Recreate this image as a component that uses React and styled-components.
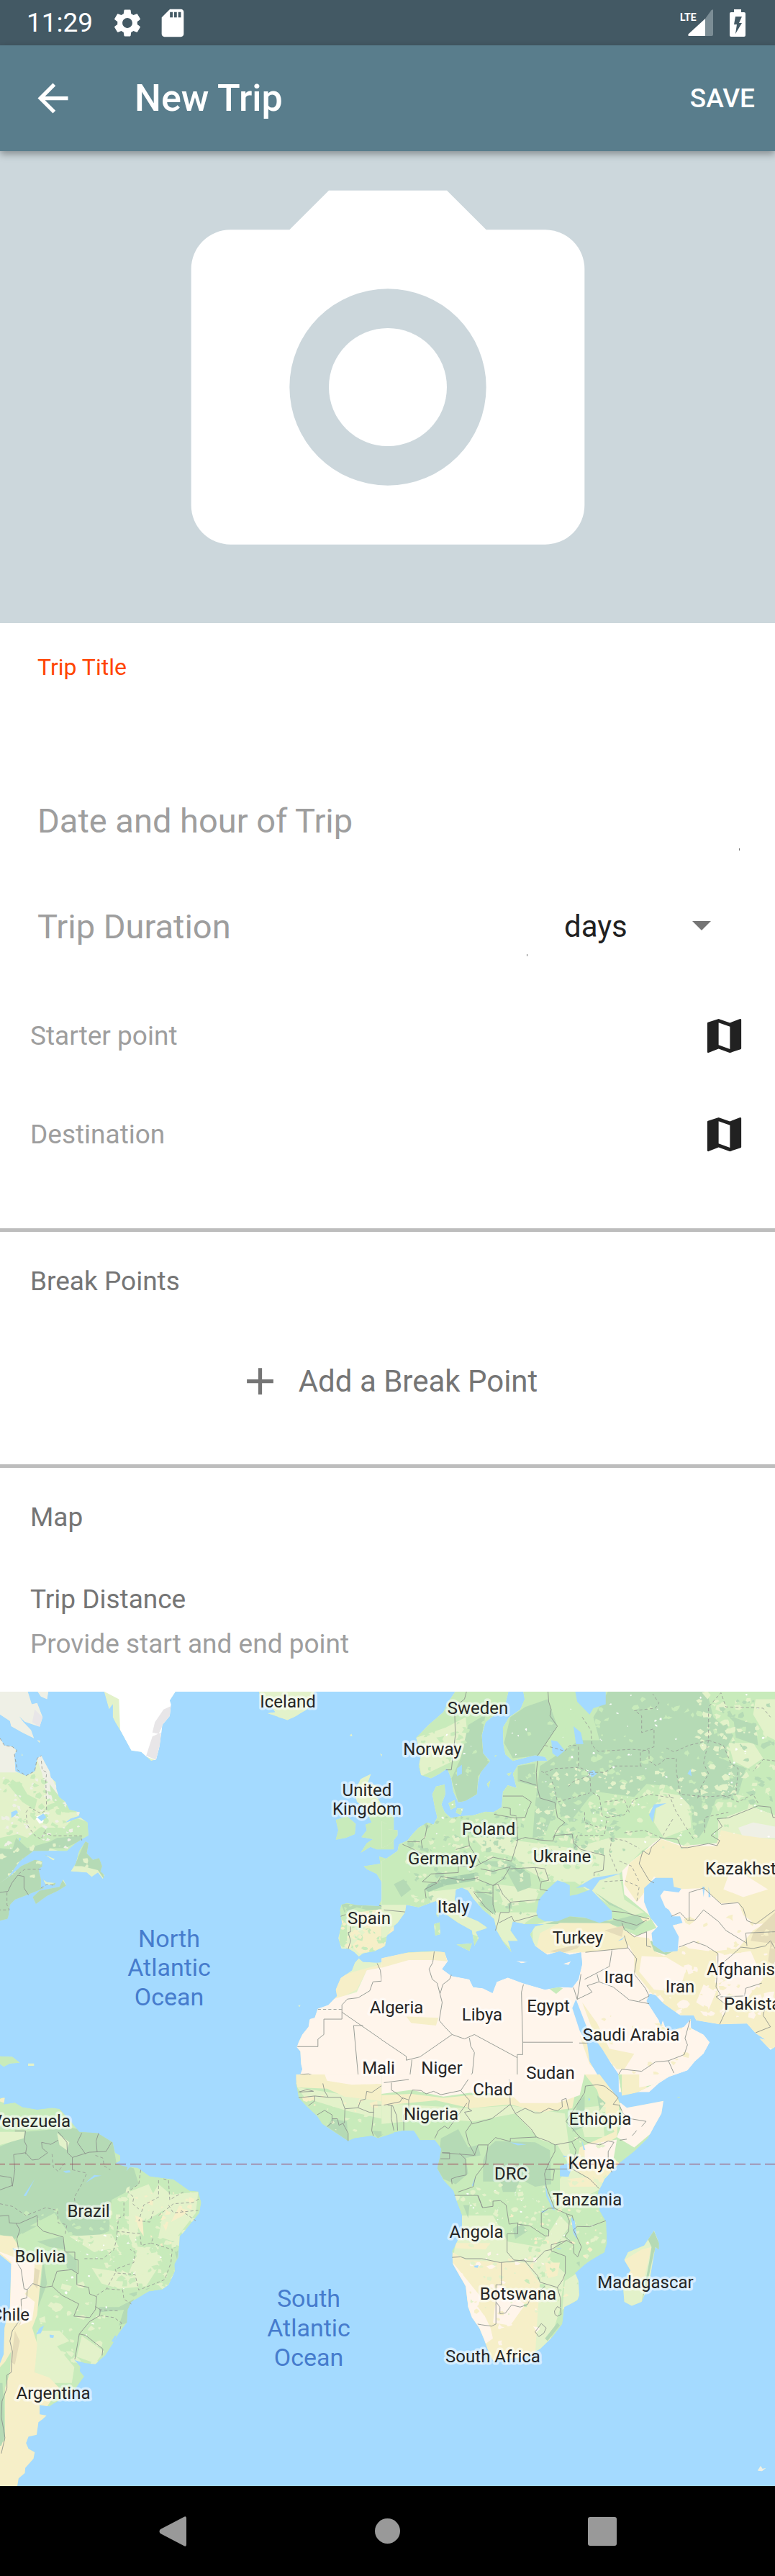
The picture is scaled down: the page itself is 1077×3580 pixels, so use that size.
import React from "react";
import styled, { createGlobalStyle } from "styled-components";
import { MdAdd, MdArrowBack, MdMap, MdSdCard, MdSettings } from "react-icons/md";

const color = {
  statusBar: "#435964",
  appBar: "#597d8c",
  cover: "#ccd7dc",
  accent: "#ff4500",
  hint: "#9e9e9e",
  secondary: "#757575",
  primary: "#212121",
  divider: "#bdbdbd",
};

const land = {
  water: "#a4daff",
  desert: "#fff5eb",
  steppe: "#f6efc8",
  grass: "#e3f2ca",
  green: "#c8ebbb",
  forest: "#b5dab5",
  tundra: "#eff0e6",
  snow: "#ffffff",
  rock: "#e8e6e8",
  sand: "#e5dcba",
};

const GlobalStyle = createGlobalStyle`
  *, *::before, *::after { box-sizing: border-box; }
  body {
    margin: 0;
    background: #fff;
    font-family: Roboto, "Liberation Sans", sans-serif;
    color: ${color.primary};
  }
  button, input, select { font-family: inherit; }
`;

const Page = styled.div`
  display: flex;
  flex-direction: column;
  min-height: 100vh;
  background: #fff;
`;

const StatusBar = styled.div`
  display: flex;
  align-items: center;
  justify-content: space-between;
  height: 63px;
  padding: 0 41px 0 37px;
  background: ${color.statusBar};
  color: #fff;
`;

const StatusGroup = styled.div`
  display: flex;
  align-items: center;
  gap: ${(p) => p.$gap}px;
`;

const Clock = styled.time`
  margin-right: 8px;
  font-size: 37px;
  line-height: 44px;
`;

const AppBar = styled.header`
  position: relative;
  z-index: 1;
  display: flex;
  align-items: center;
  height: 147px;
  padding: 0 28px 0 42px;
  background: ${color.appBar};
  color: #fff;
  box-shadow: 0 4px 10px rgba(0, 0, 0, 0.35);
`;

const PlainButton = styled.button`
  display: flex;
  align-items: center;
  justify-content: center;
  padding: 0;
  border: 0;
  background: none;
  color: inherit;
  cursor: pointer;
`;

const AppTitle = styled.h1`
  flex: 1;
  margin: 0 0 0 82px;
  font-size: 52px;
  line-height: 60px;
  font-weight: 500;
`;

const SaveButton = styled(PlainButton)`
  font-size: 37px;
  line-height: 44px;
  font-weight: 500;
`;

const Cover = styled(PlainButton)`
  width: 100%;
  background: ${color.cover};
  color: #fff;
`;

const Form = styled.form`
  display: flex;
  flex-direction: column;
`;

const TitleField = styled.div`
  display: flex;
  flex-direction: column;
  height: 201px;
  padding: 41px 49px 0 52px;
`;

const TitleLabel = styled.label`
  font-size: 32px;
  line-height: 40px;
  color: ${color.accent};
`;

const TextInput = styled.input`
  flex: 1;
  width: 100%;
  min-width: 0;
  padding: 0;
  border: 0;
  outline: 0;
  background: none;
  font-size: ${(p) => p.$size}px;
  line-height: 56px;
  color: ${color.primary};
  &::placeholder { color: ${color.hint}; opacity: 1; }
`;

const FieldRow = styled.div`
  display: flex;
  height: 147px;
  padding-left: 50px;
  padding-right: ${(p) => p.$right}px;
`;

const FieldBox = styled.div`
  position: relative;
  display: flex;
  flex: 1;
  padding-left: 2px;
  &::after {
    content: "";
    position: absolute;
    right: 0;
    bottom: 32px;
    width: 1px;
    height: 3px;
    background: ${color.secondary};
  }
`;

const UnitBox = styled.div`
  position: relative;
  display: flex;
  flex: 0 0 344px;
  svg {
    position: absolute;
    right: 89px;
    top: 66px;
    pointer-events: none;
  }
`;

const UnitSelect = styled.select`
  flex: 1;
  padding: 0 0 0 51px;
  border: 0;
  outline: 0;
  appearance: none;
  background: none;
  font-size: 42px;
  color: ${color.primary};
`;

const PlaceList = styled.div`
  padding: 10px 39px 62px 42px;
`;

const PlaceRow = styled.div`
  display: flex;
  align-items: center;
  height: 137px;
`;

const Section = styled.section`
  display: flex;
  flex-direction: column;
  padding: 47px 42px 44px;
  border-top: 5px solid ${color.divider};
`;

const SectionTitle = styled.h2`
  margin: 0;
  font-size: 37px;
  line-height: 44px;
  font-weight: 400;
  color: ${color.secondary};
`;

const AddButton = styled(PlainButton)`
  gap: 22px;
  height: 144px;
  margin-top: 44px;
  font-size: 42px;
  color: ${color.secondary};
`;

const Distance = styled.div`
  display: flex;
  flex-direction: column;
  gap: 18px;
  margin-top: 70px;
`;

const DistanceHint = styled.p`
  margin: 0;
  font-size: 37px;
  line-height: 44px;
  color: ${color.hint};
`;

const MapFrame = styled.div`
  overflow: hidden;
  background: ${land.water};
`;

const MapDrawing = styled.svg`
  display: block;
  width: 100%;
  height: auto;
`;

const CountryLabel = styled.text`
  font-size: 24px;
  fill: #262626;
  stroke: rgba(255, 255, 255, 0.55);
  stroke-width: 7px;
  stroke-linejoin: round;
  paint-order: stroke;
`;

const OceanLabel = styled.text`
  font-size: 34px;
  fill: #467ccd;
  text-anchor: middle;
`;

const NavBar = styled.nav`
  display: grid;
  grid-template-columns: repeat(3, 1fr);
  height: 125px;
  padding: 0 91px;
  background: #000;
  color: #999;
`;

/* ---------- icons ---------- */

const SignalIcon = () => (
  <svg width="46" height="40" viewBox="0 0 46 40" aria-label="LTE signal" role="img">
    <path d="M46 2.5V36a2 2 0 0 1-2 2h-9V14L43.500 2.200Q46 0 46 2.500z" fill="#7b8d95" />
    <path d="M35 14v24H13Q10 38 12 35z" fill="#fff" />
    <text x="0" y="17" fontSize="14" fontWeight="700" fill="#fff">LTE</text>
  </svg>
);

const BatteryIcon = () => (
  <svg width="22" height="38" viewBox="0 0 22 38" aria-label="Charging" role="img">
    <path
      fillRule="evenodd"
      fill="#fff"
      d="M6 0h10v4h4a2 2 0 0 1 2 2v30a2 2 0 0 1-2 2H2a2 2 0 0 1-2-2V6a2 2 0 0 1 2-2h4zM8 10L6 21h4L8 34l9-15h-4l4-9z"
    />
  </svg>
);

const CameraIcon = () => (
  <svg width="656" height="656" viewBox="0 0 24 24" fill="currentColor" aria-hidden="true">
    <path d="M9 2L7 4H4a2 2 0 0 0-2 2v12a2 2 0 0 0 2 2h16a2 2 0 0 0 2-2V6a2 2 0 0 0-2-2h-3l-2-2zM12 17a5 5 0 1 1 0-10 5 5 0 0 1 0 10z" />
    <circle cx="12" cy="12" r="3" />
  </svg>
);

/* ---------- map ---------- */

// Small irregular patches that give the terrain its texture.
function patches(seed, count, [x0, y0, x1, y1], size) {
  let s = seed;
  const rnd = () => {
    s = (s * 1664525 + 1013904223) % 4294967296;
    return s / 4294967296;
  };
  let d = "";
  for (let i = 0; i < count; i++) {
    const cx = x0 + rnd() * (x1 - x0);
    const cy = y0 + rnd() * (y1 - y0);
    const r = size * (0.3 + rnd());
    const n = 5 + Math.floor(rnd() * 4);
    for (let k = 0; k < n; k++) {
      const a = (k / n) * Math.PI * 2;
      const q = r * (0.3 + rnd());
      d += `${k ? "L" : "M"}${Math.round(cx + Math.cos(a) * q * 1.3)},${Math.round(cy + Math.sin(a) * q)}`;
    }
    d += "Z";
  }
  return d;
}

// The world is kept as four sheets, each with its own drawing grid.
const sheets = [
  {
    id: "nw",
    transform: "translate(0 -11) scale(0.34435 0.35714)",
    base: land.grass,
    shape:
      "M0,31L112,31 128,80 150,75 172,130 160,167 100,148 76,125 95,150 125,180 137,212 90,190 45,165 40,145 0,120Z M152,31L195,31 190,60 165,50Z M150,220l12,2 -2,10Z M88,270l5,8 -6,4Z M0,212L18,240 50,245 68,260 58,275 62,340 75,345 105,358 140,340 150,290 167,280 180,305 200,340 205,365 225,382 228,410 238,440 262,458 280,490 322,500 318,515 285,525 265,540 325,520 353,540 357,590 330,605 305,620 270,650 135,650 80,690 35,750 0,775 45,745 85,710 140,685 170,690 170,712 155,720 165,760 165,795 190,790 115,820 60,840 40,860 35,900 30,915 0,922Z M345,614L357,620 350,660 375,685 400,678 412,710 405,730 422,745 415,760 395,735 370,752 350,735 285,730 305,700 320,650Z M132,830L160,805 240,790 255,760 268,785 235,805 190,825 145,857Z M180,665L222,682 215,688Z M172,760L190,772 225,775 220,785 185,782Z M0,1450L50,1452 80,1475 40,1478 15,1490 0,1480Z M113,1477h25v10h-25Z M420,31L440,100 455,80 455,130 465,150 490,190 530,260 570,265 610,300 630,295 645,240 655,160 685,125 690,80 685,65 708,31Z M1045,31L1270,31 1240,100 1190,128 1160,142 1080,115 1110,110 1095,90 1050,60Z M1410,203l8,-10 5,12Z M1532,270l10,5 -1,10Z M1430,420L1455,370 1498,350 1485,385 1530,400 1515,430 1540,470 1590,520 1590,645 1520,645 1495,635 1455,658 1480,620 1505,605 1458,597 1480,570 1475,548 1500,540 1470,480 1440,460Z M1355,530L1400,515 1436,545 1432,585 1395,600 1355,607 1365,570Z M1590,690L1530,672 1535,700 1468,710 1480,722 1520,740 1545,780 1545,830 1530,860 1590,880Z M1378,860L1400,853 1440,862 1530,865 1590,870 1590,960 1560,980 1555,1020 1515,1040 1465,1050 1448,1062 1430,1045 1408,1032 1378,1032 1365,990 1380,930 1372,880Z M1590,1080L1520,1085 1465,1082 1448,1068 1432,1085 1420,1115 1375,1145 1355,1190 1360,1215 1325,1250 1282,1265 1270,1300 1250,1305 1245,1335 1220,1365 1205,1395 1198,1415 1212,1430 1215,1480 1220,1500 1208,1530 1195,1555 1205,1590 1590,1590Z M1202,1250l12,0 -6,9Z",
    areas: [
      [land.tundra, "M0,0H205V225H60L70,345 0,345Z M145,280L170,280 205,350 235,430 190,440 170,350Z"],
      [land.green, "M0,600L70,585 110,600 160,560 260,560 300,520 360,540 360,700 270,660 200,640 0,700Z M30,390L80,380 110,430 150,450 140,490 90,460Z M200,390L240,440 310,500 250,500 210,450Z M0,1440H80V1490H0Z M1340,500H1590V880H1340Z M1370,850H1590V890H1400V1010H1370Z"],
      [land.forest, "M0,640L50,645 65,600 110,640 200,615 230,600 330,592 330,610 260,640 200,640 170,720 180,800 0,940Z M345,610L360,620 350,660 410,680 420,760 395,725 330,710 300,710Z M120,850L170,800 250,760 270,790 150,860Z M1376,855L1530,865 1560,880 1480,880 1440,870 1390,890Z"],
      [land.snow, "M400,20H720L700,100 650,200 635,300 530,262 485,180 480,60Z M140,520L150,515 190,500 195,530 160,545Z"],
      [land.rock, "M660,100L695,85 685,130 655,165 640,195 615,190 625,150Z M615,205L650,190 645,240 630,297 590,280 600,250Z M140,100L172,130 160,167 130,150Z"],
      [land.steppe, "M1440,890L1590,870V960L1540,1030 1450,1050 1420,1020 1480,960Z M1340,1240L1370,1140 1430,1120 1600,1075V1095L1480,1115 1440,1190Z M1190,1545L1310,1560 1590,1550V1600H1190Z"],
      [land.desert, "M1180,1590V1400L1300,1240 1440,1200 1480,1115 1590,1095V1545L1310,1558 1250,1525 1205,1530Z"],
    ],
    texture: [
      [land.tundra, 11, 60, [0, 360, 330, 640], 8],
      [land.green, 5, 60, [20, 360, 340, 600], 12],
      [land.green, 8, 40, [1370, 860, 1560, 1040], 10],
      [land.steppe, 14, 26, [1370, 900, 1560, 1040], 10],
      [land.grass, 31, 30, [1060, 31, 1260, 135], 12],
      [land.grass, 3, 20, [0, 600, 420, 760], 10],
    ],
    lakes: "M45,500l20,-8 8,8 -12,12 -15,10Z M150,520l25,-15 12,15 -20,15Z M75,600l10,2 -5,12Z",
    borders:
      "M0,812L32,808 48,775 72,745 97,750 97,795 115,822 M1530,862L1590,890 M1522,1088L1535,1115 1540,1157 1505,1160 1492,1195 1445,1222 1402,1227 1380,1250 1380,1305 1307,1305 1307,1365 1283,1383 1283,1412 1200,1412 M1380,1278L1590,1418 M1465,1330L1427,1330 1447,1540 1330,1542 1305,1558 1270,1525 1245,1518 1212,1520 M1415,945V965L1405,968 1415,1000 1405,1032 M1375,905L1395,898",
    dashes:
      "M0,212L18,240 50,245 68,260 58,275 70,335 105,358 140,340 150,290 167,280 M167,300L170,335 188,345 185,380 188,490 165,505 120,480 105,500 110,550 140,590 165,605 185,570 M175,580L215,592H330V610 M75,740L100,722H165 M165,795L190,780 222,785 M28,812V860L38,880 0,880 M1283,1267H1380",
  },
  {
    id: "ne",
    transform: "translate(537 -11) scale(0.34435 0.35714)",
    base: land.desert,
    shape:
      "M-20,535L0,545 0,565 45,570 45,590 20,620 0,632 -20,640Z M-20,690L0,680 45,650 50,625 85,610 105,585 130,560 165,540 190,548 205,520 195,480 185,430 200,400 235,392 238,430 222,470 235,500 260,522 300,515 350,512 400,498 432,500 465,480 470,420 490,395 525,405 510,350 530,318 610,300 650,300 640,285 600,278 510,300 480,275 472,235 470,170 495,130 540,100 558,60 550,20 1590,20 1590,1400 1550,1425 1505,1380 1530,1385 1490,1360 1455,1322 1345,1325 1250,1310 1240,1290 1185,1290 1120,1245 1085,1210 1062,1207 1050,1235 1100,1310 1108,1335 1115,1308 1125,1335 1150,1350 1200,1335 1228,1305 1230,1340 1280,1365 1305,1395 1280,1440 1245,1470 1215,1505 1140,1530 1100,1555 1060,1590 -20,1590 -20,1068 90,1045 190,1040 235,1045 248,1080 225,1110 262,1137 335,1150 350,1180 390,1185 428,1203 445,1160 490,1143 550,1165 640,1190 700,1180 750,1182 775,1150 790,1090 785,1045 740,1055 700,1040 650,1055 600,1020 580,975 600,945 640,935 560,935 510,925 500,960 530,1000 490,1000 505,1045 475,1010 445,960 435,915 390,880 350,835 330,805 305,793 280,800 275,840 310,900 370,925 408,950 360,965 372,990 355,1020 345,960 290,930 230,890 200,845 130,870 80,860 75,890 45,930 20,950 0,985 -20,990Z M285,20L495,20 480,80 445,115 400,150 385,200 390,270 418,300 380,345 370,380 365,430 320,455 290,462 270,420 262,370 245,330 215,350 180,368 140,355 130,320 140,280 120,210 170,160 230,110 250,70Z M282,1015L345,1010 335,1040Z M192,935L215,928 217,975 197,980Z M200,895L212,885 210,910Z M522,1078L572,1083 545,1088Z M712,1090L745,1080 735,1095Z M250,465L275,452 280,480 260,490Z M285,485l25,0 -10,25 -20,-8Z M405,390l15,-15 -8,30Z M485,350l20,-5 -10,15Z M435,280l10,-3 -5,8Z",
    areas: [
      [land.green, "M-20,0H1590V520L1480,480 1340,530 1340,620 1200,630 1100,600 1030,660 950,720 960,820 1060,900 1090,950 1010,980 900,935 640,940 560,1060 -20,1050Z"],
      [land.grass, "M520,610L750,640 900,600 1110,600 1030,650 940,740 960,840 1040,890 1000,900 900,860 760,770 650,770 560,720 490,640Z M1340,530L1480,480 1590,520V600H1340Z M1490,60H1590V230L1530,200 1480,120Z M1380,230H1480L1520,290 1460,330 1400,300Z M1100,420L1220,440 1230,560 1120,600 1080,540Z M350,600L500,590 510,670 400,650Z M240,170L320,130 330,230 270,300 140,360 120,210Z M170,810L350,790 420,1000 300,960 180,860Z M440,780L620,800 600,850 480,870Z M420,890L620,890 560,930 520,1050 430,960Z M-20,860H80L60,1000H-20Z M590,940L700,910 700,1000 590,1030Z M1500,520H1590V640H1480Z"],
      [land.tundra, "M1420,560L1480,540 1590,560V600L1440,600Z"],
      [land.forest, "M900,20H1290L1320,130 1400,200 1350,290 1450,330 1420,430 1330,450 1290,560 1260,600 1240,590 1230,480 1150,400 1050,390 1000,440 850,420 820,440 740,540 690,460 640,590 590,600 600,470 620,320 700,270 780,220 860,220 835,130Z M500,130L560,90 650,60 690,165 610,280 510,290 475,230Z M330,160L400,120 385,200 390,270 418,305 370,360 365,430 320,460 290,460 262,370 300,290Z M380,690L500,690 580,740 585,790 530,810 480,720 400,705Z M360,800L430,830 440,900 380,860Z M640,935L740,905 800,912 900,925 1000,900 900,850 840,810 900,860 1050,920 1000,960 900,935Z M1400,130L1490,160 1500,240 1410,210Z M530,320L600,310 605,400 530,380Z M1010,1020L1070,1000 1120,1045 1180,1040 1150,1062Z M30,780L70,760 100,800 60,830Z"],
      ["#a7cfae", "M155,800L170,780 240,755 360,735 360,765 240,785 170,810Z M490,700L560,725 540,740Z"],
      [land.steppe, "M1030,660L1110,605 1190,632 1330,632 1350,570 1440,590 1590,610V930L1490,935 1440,900 1420,850 1350,855 1280,795 1160,800 1080,750 1035,820 1010,850 960,780 980,700Z M600,1050L620,970 700,930 900,932 1000,980 970,1030 800,1045Z M960,980L1060,990 1080,1040 1120,1060 1200,1020 1330,1040 1420,1030 1480,960 1590,900V1430L1240,1320 1100,1240 1000,1120 1000,1060Z M-20,1050L235,1040 245,1080 190,1075 90,1075 -20,1105Z M790,1240L850,1320 900,1420 1000,1440 960,1500 930,1500 860,1420Z M80,1295L210,1300 200,1330 100,1320Z M780,1370L810,1400 840,1500 820,1480Z"],
      [land.desert, "M1030,1060L1130,1065 1210,1110 1180,1200 1080,1190 1020,1120Z M1330,1060L1470,1040 1520,1150 1440,1240 1340,1230Z M1280,1170L1330,1200 1300,1270 1250,1240Z M1390,720L1440,740 1540,800 1440,830 1360,800Z M1180,1000L1340,1010 1300,1040 1220,1030Z"],
      [land.sand, "M1480,970L1590,870V1110L1540,1080 1550,1010 1470,1000Z M660,1040L790,1010 770,1030 700,1050Z M880,960L960,940 950,985Z"],
      [land.green, "M655,1185L680,1175 712,1185 685,1207Z"],
    ],
    texture: [
      [land.green, 21, 130, [560, 40, 1440, 600], 11],
      [land.grass, 42, 150, [600, 330, 1250, 640], 9],
      [land.forest, 17, 100, [60, 500, 560, 900], 10],
      [land.grass, 71, 120, [80, 520, 560, 1000], 9],
      [land.forest, 91, 70, [620, 480, 960, 660], 11],
      [land.green, 33, 60, [500, 620, 900, 900], 11],
      [land.grass, 55, 90, [1250, 40, 1568, 480], 13],
      [land.forest, 6, 50, [1350, 60, 1568, 460], 13],
      [land.snow, 77, 90, [130, 40, 1550, 620], 4],
      [land.green, 12, 50, [130, 60, 480, 360], 12],
      [land.steppe, 23, 60, [1020, 900, 1568, 1350], 12],
      [land.desert, 29, 40, [1050, 1040, 1568, 1300], 14],
      [land.steppe, 61, 26, [800, 1240, 1230, 1540], 10],
    ],
    lakes:
      "M605,890L615,840 650,800 690,765 722,775 740,785 740,825 770,820 825,800 865,840 910,885 910,915 860,930 800,910 740,905 690,925 640,925 612,910Z M765,795L835,755 950,737 860,765 830,805 800,790Z M1040,795L1085,755 1155,755 1160,790 1190,797 1180,812 1120,805 1105,825 1125,870 1140,880 1155,905 1185,905 1195,930 1155,940 1180,985 1175,1040 1120,1045 1075,1015 1070,970 1095,945 1065,910 1040,850Z M760,20H885L885,80 835,95 820,120 770,70Z M765,1228L750,1262 780,1350 810,1400 820,1470 860,1535 880,1600 938,1600 937,1520 905,1475 870,1420 810,1340 790,1290Z M665,220L690,225 720,260 690,285 670,270Z M755,165L785,190 795,235 765,235Z M285,330L305,315 305,350 285,360Z M815,345l20,-10 15,15 -20,15Z M1275,790l10,0 -5,40Z M1300,790l8,40 -8,0Z M1060,510L1080,470 1130,465 1085,485 1075,540Z M1215,350l12,-18 5,28Z M935,1000l25,-15 -10,12Z",
    borders:
      "M193,1042L187,1085 172,1110 185,1150 205,1165 217,1210 225,1240 213,1310 235,1335 265,1365 135,1452 80,1465 80,1450 -20,1385 M262,1133L255,1150 228,1170 217,1205 M553,1170L545,1200 550,1395H752 M778,1398H815 M550,1395V1443H528V1590 M265,1365L315,1382 355,1365 528,1455 M335,1378L340,1410 355,1435 347,1515 300,1568 M103,1463L93,1540 -10,1555 M770,1228L830,1200 810,1175 858,1160 915,1180 980,1230 1060,1245 M803,1045L905,1035 975,1028 M910,1037L900,1100 800,1150 M850,1130L858,1160 M960,980L975,1028 1010,1070 1000,1130 1045,1185 1060,1215 1020,1235 M755,1182L770,1228 785,1130 M1225,1310L1205,1380 1215,1405 1202,1443 1138,1467 1085,1472 1030,1508 950,1500 937,1520 M1138,1467L1160,1515 M1180,1025L1240,1003 1290,1020 1338,1050V1100L1330,1180 1348,1210 1330,1218 1378,1255 1345,1325 M1348,1218L1445,1215 1450,1185 1515,1165 M1340,1100L1390,1060 1430,1025 1480,1030 1530,1020 1550,1000 1568,1030 M1150,905L1185,890 1215,920H1245L1280,880 1340,925 1370,960 1455,1010 M1222,920V812L1280,795 1352,858 1420,852 1440,875 1455,922 1490,935 1568,880 M1455,1020L1450,970 1568,965 M1530,1255L1520,1290 1550,1335 1490,1358 M1080,775L1060,765 1020,700 1035,650 1060,665 1070,635 1110,600 1175,605 1190,638 1215,638 1300,622 1335,630 1345,610 1310,590 1355,555 1335,525 1380,522 1500,475 1550,480 1560,520 1568,520 M522,610L560,598 620,608 672,612 680,590 750,585 755,620 785,645 880,668 875,725 838,735V748 M620,445L680,462 690,520 720,540 695,560 672,600 M323,31L315,60 275,90 278,200 262,335 240,335 M652,31L655,70 665,100 660,125 690,165 610,280 M610,300L605,345 608,400 620,445 M470,437H550L585,460 570,490 560,520 515,522 435,508 M470,480L500,485V510L525,515 M538,375L605,395 M525,520L530,610 505,690 430,675 380,700 335,630 330,590 M335,630L280,645 M165,550L155,600 140,610 145,640 M85,615H135 M65,625L100,640 150,665 M145,770L180,740 290,735 290,710 360,710 380,700 M145,770L205,775 220,750 310,765 370,755 M160,835L155,800 205,775 M380,720L430,730 500,712 470,760 430,785 365,760 M430,785L450,780 470,820 500,850 620,840 M430,785V860L440,890 M350,810L425,815 M355,815L400,870 430,895 M500,850L495,890 460,890 450,930 440,960 M455,930L505,905 515,925 610,900 M500,720L600,715 640,720 655,765 625,770 620,800 650,805 M600,715L620,770 M910,885L960,890 1060,915 M915,915L1010,940 1050,920 M950,930L960,955 1000,985 1050,965V1020L1068,1025 M-10,880L75,888",
    dashes:
      "M640,240L720,262 740,240 775,240 M790,130L825,180 830,240 855,263 990,255 1060,260 M1000,105L1085,95 1100,75 1075,40 M1010,110L1030,125 1030,190 1080,175 1080,245 1025,265V320 M775,245V325 M640,345L680,330 780,325 820,345 880,345 920,320 1030,320 M625,340L660,360 680,410 690,460 820,425 M735,400L755,380 840,350 M820,345L825,420 860,440 M1060,260L1060,300 1090,320 1130,290 1170,290V340L1185,430 1290,440 M1130,250L1160,265 1220,240 1300,220V90L1350,35 1370,90 1520,95 1550,130 M1300,220L1360,240 1390,310 1420,330 1410,430 1360,440 M1300,220L1280,310 1300,350 1270,400 1255,450 M1290,440L1365,435 1420,460 1480,430 1500,465 M1568,300L1520,295 1480,340 M860,440L870,510 890,520 880,590 770,590 760,640 M890,520L960,510 1000,450 1060,430 1160,445 M880,460L960,450 980,500 M800,500V540L860,560 M910,600L900,660 930,730 M960,580L1040,570 1110,600 1160,520 M940,690L990,710 1020,770 M880,770L960,765 1020,790 1010,850 M900,600L960,610 1020,640 M1140,430L1170,500 1200,545 1240,605 M1285,580V520L1380,500",
  },
  {
    id: "sw",
    transform: "translate(0 539) scale(0.34435 0.3635)",
    base: land.green,
    shape:
      "M-10,70L20,70 15,95 60,88 90,105 150,115 210,108 240,112 290,165 320,200 395,205 455,240 465,280 485,290 485,310 465,322 515,335 510,350 525,335 555,337 605,370 700,382 765,425 800,428 812,470 805,510 775,545 740,585 725,600 720,680 705,705 705,735 680,785 655,803 600,810 530,850 515,880 512,930 480,970 455,1010 425,1055 385,1088 345,1085 300,1072 325,1098 322,1115 340,1135 310,1175 290,1200 215,1240 200,1250 160,1245 160,1280 188,1285 170,1300 155,1310 148,1358 115,1365 105,1390 115,1412 140,1425 135,1450 102,1485 100,1505 75,1525 65,1580 -10,1580 -10,1110 15,1050 18,950 40,870 45,705 0,670 -10,665Z M1195,-20L1195,15 1205,70 1240,105 1280,140 1300,170 1340,195 1405,235 1430,225 1500,215 1525,225 1590,205 1590,-20Z",
    areas: [
      [land.forest, "M-10,260L40,240 100,200 290,185 395,205 455,240 470,320 540,340 560,400 510,430 450,460 440,580 360,610 280,590 220,510 120,560 60,610 -10,590Z M260,650L310,690V740L270,720Z M150,620L250,600 265,650 200,640Z M540,840L515,930 480,940 500,880 400,890 400,870 480,870Z M610,795L540,830 520,820Z M690,600L725,600 715,690 700,640Z M1340,150L1400,160 1405,235 1320,180Z M1500,195L1560,200 1525,225Z M90,590L60,560 150,560Z M175,690L190,780 150,880 165,780Z"],
      [land.grass, "M370,720L520,740 560,640 640,640 650,700 590,790 480,800 410,780Z M640,400L690,440 800,430 790,510 700,620 640,600 660,500 590,540 590,480Z M150,960L240,960 280,1000 230,1020 300,1100 290,1160 200,1160 140,1120Z M330,980L420,1040 385,1085 310,1060Z M-10,200L100,200 95,225 0,250Z M230,205L280,240 270,270 240,250Z M280,600L450,590 480,640 380,660Z M1200,30L1400,60 1590,60V160L1400,120 1230,70Z M520,430L600,400 640,480 560,560 540,640 520,600Z M250,780L290,790 280,810 245,800Z"],
      [land.steppe, "M-10,595L50,600 70,630 75,690 170,700 150,900 130,950 150,1010 140,1120 200,1140 240,1180 190,1250 160,1245 200,1300 150,1370 160,1430 70,1590H-10Z M1190,-20H1590V95L1520,80 1390,65 1320,35 1200,30Z M545,520L575,530 580,600 560,570Z M-10,80L20,65 18,90Z M650,540L680,545 670,580Z M720,490L760,500 740,520 690,545Z"],
      [land.desert, "M45,700H140L135,780 100,820 140,850 130,920 80,940 80,860 40,900Z M1310,-20H1590V15L1420,20 1320,5Z M-10,655L60,680V710Z"],
      [land.sand, "M60,960L80,1000 60,1090 45,1080Z M140,720L160,730 150,800 135,780Z M70,880L95,900 80,940Z"],
      [land.green, "M-10,1110L20,1080 45,1040 40,1120 20,1180 20,1380 -10,1400Z"],
      [land.forest, "M-10,1160L10,1160 20,1360 5,1400 -10,1400Z"],
    ],
    texture: [
      [land.grass, 19, 90, [430, 420, 780, 800], 13],
      [land.green, 27, 70, [380, 620, 720, 860], 13],
      [land.green, 5, 30, [100, 500, 460, 640], 10],
      [land.grass, 44, 40, [150, 780, 420, 1100], 13],
      [land.steppe, 12, 26, [540, 420, 790, 640], 9],
      [land.snow, 65, 40, [220, 560, 760, 980], 4],
      [land.steppe, 2, 12, [1220, 20, 1560, 120], 12],
      [land.grass, 8, 16, [1280, 100, 1560, 200], 7],
    ],
    lakes: "M145,975L160,950 178,940 165,970Z M200,975l18,3 -3,10 -14,-2Z M50,645l20,5 -5,12Z M450,1000l15,-22 5,4 -12,22Z M95,445l45,-65 -35,65Z M255,350l25,-3 5,8 -20,2Z M345,395L380,365 410,368 385,372Z",
    borders:
      "M60,197H103L98,235 108,255 103,285 M103,280L55,287 60,345 50,408 45,375 0,368 M0,422L50,405 M103,280L130,308 155,305 192,280 170,262 168,240 205,248 235,232 M235,200L270,240 272,280 292,298 M330,205L312,240 345,285 M292,298L360,278 428,275 450,240 M398,205L388,235 392,278 M292,298V345 M0,522L35,520 38,548 78,550 150,520 152,560 175,580 255,602 262,660H302V688L315,690V743L290,727 230,733 210,790 M65,550L80,575 68,610 75,650 68,700 85,725 97,800 110,803 132,780 175,795 210,790 250,825 318,858 298,905 362,910 385,880 390,830 362,820 358,795 310,785V743 M385,868L405,880 402,903 362,925 320,973 302,1070 M320,973L345,978 415,1030 412,1055 M110,803L108,835 85,840 87,910 50,960 40,1000 50,1040 45,1120 28,1130V1180L8,1230 5,1290 15,1340 20,1370 5,1430 M1205,70L1270,63 1325,68 1375,68 1392,112 1390,165 1368,175 1362,150 1340,150 1340,165 1320,180 M1270,63V82L1245,100 M1303,15L1310,45 1325,68 M1280,135L1310,118 1340,135V150 M1392,112L1445,108 1490,125H1508V98H1590 M1445,108L1455,80 1475,75 1480,45 1500,50 1560,10 M1508,125L1500,195 1507,215 M1385,170L1405,205V235 M1205,48L1240,38 1265,45 1210,48",
    dashes:
      "M210,285L215,335 235,352 260,320 M292,345L350,358 330,400 300,450 305,490 M385,290L415,300 420,330 445,345 M568,345L560,400 515,430 540,450 535,475 560,495 M500,470V520L478,530 470,610 460,650 415,685 340,685 M0,475L50,485 105,520 185,490 232,500 235,548 270,555 262,595 M640,385V450L580,480 560,540 605,545 620,500 M660,380L680,385 685,460 740,430 M640,520L700,475 780,470 805,455 M680,480L700,510 800,500 M470,580L565,590 570,635 610,625 620,600 M610,625L695,650 690,700 665,765 560,805 545,745 470,740 465,725 540,700 545,660 525,650 M465,740L430,800 390,825 M430,800L495,805 500,840 530,858 M400,880L480,885 M405,903L460,910 490,930 485,955 M730,500L790,540",
  },
  {
    id: "se",
    transform: "translate(537 539) scale(0.34435 0.3635)",
    base: land.green,
    shape:
      "M-20,212L70,195 110,195 135,232 195,232 222,265 215,300 205,340 230,385 270,425 285,470 305,520 305,580 275,640 265,655 268,705 320,790 330,870 345,910 375,950 395,995 408,1030 430,1075 470,1070 560,1060 620,1030 670,985 710,935 718,870 770,845 778,825 775,770 762,740 810,700 880,660 890,625 887,545 860,500 855,430 880,380 940,320 1000,275 1055,225 1080,180 1110,130 1118,82 1030,98 970,108 940,85 935,70 900,30 860,-20 -20,-20Z M935,-20L950,62 1010,50 1075,20 1160,-20Z M1170,66l18,0 -8,4Z M1080,578L1100,625 1100,650 1085,640 1060,780 1030,850 990,865 960,850 955,790 985,730 960,690 975,660 1040,635Z M1498,1495L1510,1477 1518,1488 1532,1485 1515,1498Z",
    areas: [
      [land.grass, "M-20,90L330,110 500,100 720,130 740,280 820,330 900,360 860,420 700,500 700,380 740,330 690,250 620,230 520,130 350,160 200,150 -20,170Z M300,520L430,520 490,620 620,640 700,520 740,560 650,680 720,740 700,880 640,1060 560,1060 600,900 500,700 270,690 280,600Z M770,110L870,100 880,220 800,220Z M720,770L770,740 790,830 710,880Z M950,560H1110L1040,870H940Z"],
      [land.steppe, "M-20,60L100,55 230,70 340,60 500,60 760,60 750,110 620,125 500,95 340,110 200,80 -20,100Z M800,-20H900L940,90 930,220 860,260 940,320 880,400 760,350 780,260 920,200 870,100 850,40Z M268,660L320,690 500,700 560,700 620,780 610,900 600,1060 420,1090 300,780 260,700Z M950,-20H1050V40L950,65Z M730,380L840,370 850,410 740,410Z M1030,650L1070,640 1040,760 980,770 960,690Z M640,700L700,700 690,750 650,760Z M280,625H420L400,650 280,645Z M400,570L460,560 450,580Z"],
      [land.desert, "M-20,-20H320L340,50 230,65 100,40 -20,55Z M320,-20H800L780,60 690,90 540,90 500,55 330,50Z M940,90L1130,70 1100,180 1000,260 930,220 960,150Z M268,700L320,760 380,830 370,870 400,910 420,950 430,990 400,1010 330,900Z M450,780L560,860 500,940 430,930Z M1020,-20H1170L1080,20 1020,30Z M800,250L930,230 910,340 860,320 800,300Z"],
      [land.forest, "M220,225L290,190 330,260 370,250 380,290 320,300 330,360 280,400 230,380 205,340Z M410,260L440,235 600,240 660,270 665,400 600,410 540,380 520,430 470,430 460,390 390,390 390,310Z M510,570L545,550 570,580 520,610Z M1050,600L1080,580 1100,625 1100,650 1080,660 1050,790 1030,850 1060,700 1070,640Z M770,90L800,60 800,180 750,200Z M850,60L885,90 860,120Z M690,930L700,940 650,1000 640,990Z M310,480L335,480 330,530Z M765,700l15,-5 0,20Z"],
      [land.tundra, "M1490,1470H1540V1500H1490Z"],
    ],
    texture: [
      [land.grass, 73, 50, [300, 430, 880, 680], 9],
      [land.steppe, 36, 40, [480, 480, 880, 850], 8],
      [land.green, 13, 50, [560, 620, 880, 900], 9],
      [land.grass, 9, 40, [270, 400, 700, 600], 8],
      [land.desert, 52, 30, [300, 660, 640, 1040], 11],
      [land.grass, 15, 26, [340, 690, 700, 900], 8],
      [land.steppe, 81, 16, [340, 760, 470, 930], 10],
      [land.grass, 4, 30, [720, 80, 900, 440], 9],
      [land.snow, 67, 40, [300, 420, 870, 640], 3],
    ],
    lakes: "M700,330L735,320 745,345 735,372 700,370Z M640,380L650,440 680,500 672,498 645,445Z M745,525L760,540 770,612 755,590Z M788,232L803,270 795,268Z M345,405L360,370 350,410Z M500,240L565,248 530,252Z M355,712L372,710 368,720 355,718Z M685,645l22,0 -10,5Z M625,505l30,-10 -25,15Z M712,290l20,4 -15,3Z M815,70l8,5 -6,8Z",
    borders:
      "M-10,12L90,0 M90,78L105,40 140,42 160,55 190,45 220,58 300,42 330,0 M90,78L65,70 55,85 -10,98 M20,12L20,40 45,55 68,75 M90,78V120L70,135V195 M5,98L25,100 42,140 45,195 M20,98L20,150 30,195 M300,42L335,80 330,110 345,120 315,125 345,165 320,200 330,240 358,290 M325,90L280,150 250,188 235,178 210,195 195,225 M345,170L425,150 500,95 520,130 585,190 605,220 500,225V237L440,222 410,250 370,250 355,290 225,280 M410,250L400,320 360,370 350,410 290,430 M225,280L255,280V303H218 M295,282L320,305 322,365 285,372 262,380 265,400 M275,443L368,443 388,490 430,485V465L460,463 483,480 495,553 530,548 M530,548V590H487V660L515,690 597,697 640,655 665,650 727,615 755,630 757,665 772,678 787,640 755,575 770,562 820,563 885,540 M530,553L580,560 640,598H655V575L625,563V510L655,492 678,492 730,515 750,520 755,540 M265,680L300,678 320,685H385L460,700 555,690 610,750 620,775 690,795 712,765 722,740V675L665,655V632L727,615 M464,700V785H442V935L425,943 385,938 368,935 M442,850L458,870V895L480,893 505,862 540,870 570,860 580,840 640,790 M690,795L702,835V870 M500,95L495,0 M520,130L560,110 600,128 620,128 655,110 690,120 710,105 708,78 725,72 735,115 M605,220L650,235 680,250 748,238 780,220 725,160 800,50 803,25 850,20 880,25 920,55 935,70 915,95 M915,95L940,98 955,130 985,150 1048,160 1030,180 M748,238L765,270 750,340 M780,220L810,240 862,250 895,235 918,240 895,275V320L910,355 M655,342H750L820,380 858,417 M680,250V275L655,320 638,360 645,410 678,492 M640,345L678,345 672,385 640,380 M727,515L738,540 735,580 720,600 750,625 M370,443L388,490 M678,885L690,868 703,875 705,898 690,905 680,898Z M600,965L625,933 645,950 635,970 615,983Z M1010,195L992,215 M942,232L970,228",
    dashes: "",
  },
];

const countries = [
  ["Iceland", 400, 22], ["United", 510, 145], ["Kingdom", 510, 171], ["Spain", 513, 323],
  ["Algeria", 551, 447], ["Mali", 526, 531], ["Sweden", 664, 31], ["Norway", 601, 88],
  ["Poland", 679, 199], ["Germany", 615, 240], ["Ukraine", 781, 237], ["Italy", 630, 307],
  ["Turkey", 803, 350], ["Iraq", 860, 405], ["Iran", 945, 418], ["Egypt", 762, 445],
  ["Libya", 670, 457], ["Saudi Arabia", 877, 485], ["Niger", 614, 531], ["Sudan", 765, 538],
  ["Chad", 685, 561], ["Nigeria", 599, 595], ["Ethiopia", 834, 602], ["Kenya", 822, 663],
  ["DRC", 710, 678], ["Tanzania", 816, 714], ["Angola", 662, 759], ["Botswana", 720, 845],
  ["Madagascar", 897, 829], ["South Africa", 685, 932], ["Brazil", 123, 730],
  ["Bolivia", 56, 793], ["Argentina", 74, 983],
  ["Kazakhstan", 980, 254, "start"], ["Afghanistan", 982, 394, "start"], ["Pakistan", 1006, 442, "start"],
  ["Venezuela", 98, 605, "end"], ["Chile", 41, 874, "end"],
];

const oceans = [
  [235, [["North", 355], ["Atlantic", 395], ["Ocean", 436]]],
  [429, [["South", 855], ["Atlantic", 896], ["Ocean", 937]]],
];

function WorldMap() {
  return (
    <MapDrawing viewBox="0 0 1077 1104" role="img" aria-label="World map">
      <defs>
        {sheets.map((s) => (
          <clipPath id={`land-${s.id}`} key={s.id}>
            <path d={s.shape} />
          </clipPath>
        ))}
      </defs>
      {sheets.map((s) => (
        <g key={s.id} transform={s.transform}>
          <g clipPath={`url(#land-${s.id})`}>
            <path d={s.shape} fill={s.base} />
            {s.areas.map(([fill, d], i) => (
              <path key={i} d={d} fill={fill} />
            ))}
            {s.texture.map(([fill, seed, count, box, size], i) => (
              <path key={i} d={patches(seed, count, box, size)} fill={fill} />
            ))}
          </g>
          <path d={s.lakes} fill={land.water} />
          <path d={s.borders} fill="none" stroke="#8b918b" strokeWidth="2.500" />
          <path d={s.dashes} fill="none" stroke="#989c96" strokeWidth="2.500" strokeDasharray="12 9" />
        </g>
      ))}
      <path d="M-8 656.500H1077" stroke="#a03a50" strokeWidth="1" strokeDasharray="15 6" />
      {countries.map(([name, x, y, anchor = "middle"]) => (
        <CountryLabel key={name} x={x} y={y} textAnchor={anchor}>{name}</CountryLabel>
      ))}
      {oceans.map(([x, lines]) =>
        lines.map(([word, y]) => (
          <OceanLabel key={word + y} x={x} y={y}>{word}</OceanLabel>
        ))
      )}
    </MapDrawing>
  );
}

/* ---------- screen ---------- */

function PlaceField({ name, label }) {
  return (
    <PlaceRow>
      <TextInput $size={37} type="text" name={name} placeholder={label} aria-label={label} />
      <PlainButton type="button" aria-label={`Pick ${label} on map`}>
        <MdMap size={63} />
      </PlainButton>
    </PlaceRow>
  );
}

export default function App() {
  return (
    <Page>
      <GlobalStyle />
      <StatusBar>
        <StatusGroup $gap={17}>
          <Clock>11:29</Clock>
          <MdSettings size={46} />
          <MdSdCard size={46} />
        </StatusGroup>
        <StatusGroup $gap={23}>
          <SignalIcon />
          <BatteryIcon />
        </StatusGroup>
      </StatusBar>

      <AppBar>
        <PlainButton type="button" aria-label="Back">
          <MdArrowBack size={63} />
        </PlainButton>
        <AppTitle>New Trip</AppTitle>
        <SaveButton type="submit" form="trip">SAVE</SaveButton>
      </AppBar>

      <Cover type="button" aria-label="Add a photo">
        <CameraIcon />
      </Cover>

      <Form id="trip" onSubmit={(e) => e.preventDefault()}>
        <TitleField>
          <TitleLabel htmlFor="title">Trip Title</TitleLabel>
          <TextInput $size={47} id="title" name="title" type="text" />
        </TitleField>
        <FieldRow $right={49}>
          <FieldBox>
            <TextInput $size={47} name="date" type="text" placeholder="Date and hour of Trip" aria-label="Date and hour of Trip" />
          </FieldBox>
        </FieldRow>
        <FieldRow $right={0}>
          <FieldBox>
            <TextInput $size={47} name="duration" type="text" placeholder="Trip Duration" aria-label="Trip Duration" />
          </FieldBox>
          <UnitBox>
            <UnitSelect name="unit" aria-label="Duration unit" defaultValue="days">
              <option>days</option>
              <option>hours</option>
            </UnitSelect>
            <svg width="26" height="13" viewBox="0 0 26 13" aria-hidden="true">
              <path d="M0 0h26L13 13z" fill={color.secondary} />
            </svg>
          </UnitBox>
        </FieldRow>
        <PlaceList>
          <PlaceField name="start" label="Starter point" />
          <PlaceField name="destination" label="Destination" />
        </PlaceList>
      </Form>

      <Section>
        <SectionTitle>Break Points</SectionTitle>
        <AddButton type="button">
          <MdAdd size={63} />
          Add a Break Point
        </AddButton>
      </Section>

      <Section>
        <SectionTitle>Map</SectionTitle>
        <Distance>
          <SectionTitle as="h3">Trip Distance</SectionTitle>
          <DistanceHint>Provide start and end point</DistanceHint>
        </Distance>
      </Section>

      <MapFrame>
        <WorldMap />
      </MapFrame>

      <NavBar aria-label="System">
        <PlainButton type="button" aria-label="Back">
          <svg width="38" height="42" viewBox="0 0 38 42" aria-hidden="true">
            <path d="M38 3v36q0 4-3.500 2L2 24q-3-3 0-6L34.500 1Q38-1 38 3z" fill="currentColor" />
          </svg>
        </PlainButton>
        <PlainButton type="button" aria-label="Home">
          <svg width="35" height="35" viewBox="0 0 35 35" aria-hidden="true">
            <circle cx="17.500" cy="17.500" r="17.500" fill="currentColor" />
          </svg>
        </PlainButton>
        <PlainButton type="button" aria-label="Recent apps">
          <svg width="40" height="40" viewBox="0 0 40 40" aria-hidden="true">
            <rect width="40" height="40" rx="3" fill="currentColor" />
          </svg>
        </PlainButton>
      </NavBar>
    </Page>
  );
}
